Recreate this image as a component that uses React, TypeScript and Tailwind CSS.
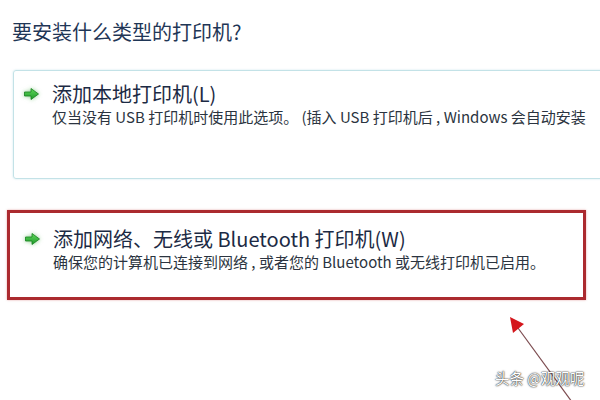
import React from "react";

const font = { fontFamily: '"Noto Sans CJK SC", "Noto Sans", sans-serif' };

function GreenArrow() {
  return (
    <svg width="17" height="14" viewBox="0 0 17 14" className="drop-shadow-[0_0_2px_rgba(60,170,60,0.6)]">
      <defs>
        <linearGradient id="ga" x1="0" y1="0" x2="0" y2="1">
          <stop offset="0" stopColor="#5fd85a" />
          <stop offset="1" stopColor="#1f9a2a" />
        </linearGradient>
      </defs>
      <path d="M1.5 5 H8 V1.5 L15.5 7 L8 12.5 V9 H1.5 Z" fill="url(#ga)" stroke="#17801f" strokeWidth="0.8" strokeLinejoin="round" />
    </svg>
  );
}

function Option({ title, desc, titleGap }: { title: string; desc: string; titleGap: string }) {
  return (
    <div className="flex items-start">
      <div className="w-[17px] h-[22px] flex items-center">
        <GreenArrow />
      </div>
      <div className="ml-[12px]">
        <div className="text-[20px] leading-[22px] text-[#1c2a44] whitespace-nowrap">{title}</div>
        <div className={`${titleGap} text-[15px] leading-[16px] text-[#2b3440] whitespace-pre`}>{desc}</div>
      </div>
    </div>
  );
}

export default function App() {
  return (
    <div className="relative w-[600px] h-[400px] overflow-hidden bg-white" style={font}>
      <h1 className="pt-[21px] pl-[12px] text-[20px] leading-[22px] text-[#1f3656] whitespace-nowrap">
        要安装什么类型的打印机?
      </h1>

      {/* local printer */}
      <div className="ml-[13px] mt-[27px] w-[620px] h-[109px] border border-[#c3e2e7] rounded-[3px] shadow-[0_0_2px_rgba(160,210,220,0.6)] pl-[9px] pt-[12px] overflow-hidden">
        <Option
          title="添加本地打印机(L)"
          desc="仅当没有 USB 打印机时使用此选项。 (插入 USB 打印机后 , Windows 会自动安装"
          titleGap="mt-[4px]"
        />
      </div>

      {/* network printer, highlighted */}
      <div className="ml-[7px] mt-[31px] w-[579px] h-[90px] border-[3px] border-[#ab2a2f] shadow-[0_0_2px_rgba(200,80,80,0.5)] pl-[14px] pt-[15px]">
        <Option
          title="添加网络、无线或 Bluetooth 打印机(W)"
          desc="确保您的计算机已连接到网络 , 或者您的 Bluetooth 或无线打印机已启用。"
          titleGap="mt-[4px]"
        />
      </div>

      {/* red pointer arrow */}
      <svg className="absolute left-0 top-0" width="600" height="400" viewBox="0 0 600 400">
        <line x1="572" y1="402" x2="518" y2="328" stroke="#7c4b4f" strokeWidth="1.2" />
        <polygon points="510,317 524,324 513,333" fill="#d4161c" />
      </svg>

      {/* watermark */}
      <div className="absolute left-[495px] top-[369px] text-[14.5px] leading-[18px] text-white whitespace-nowrap [text-shadow:0_0_2px_#333,0_0_1px_#000]">
        头条 @观观呢
      </div>
    </div>
  );
}
